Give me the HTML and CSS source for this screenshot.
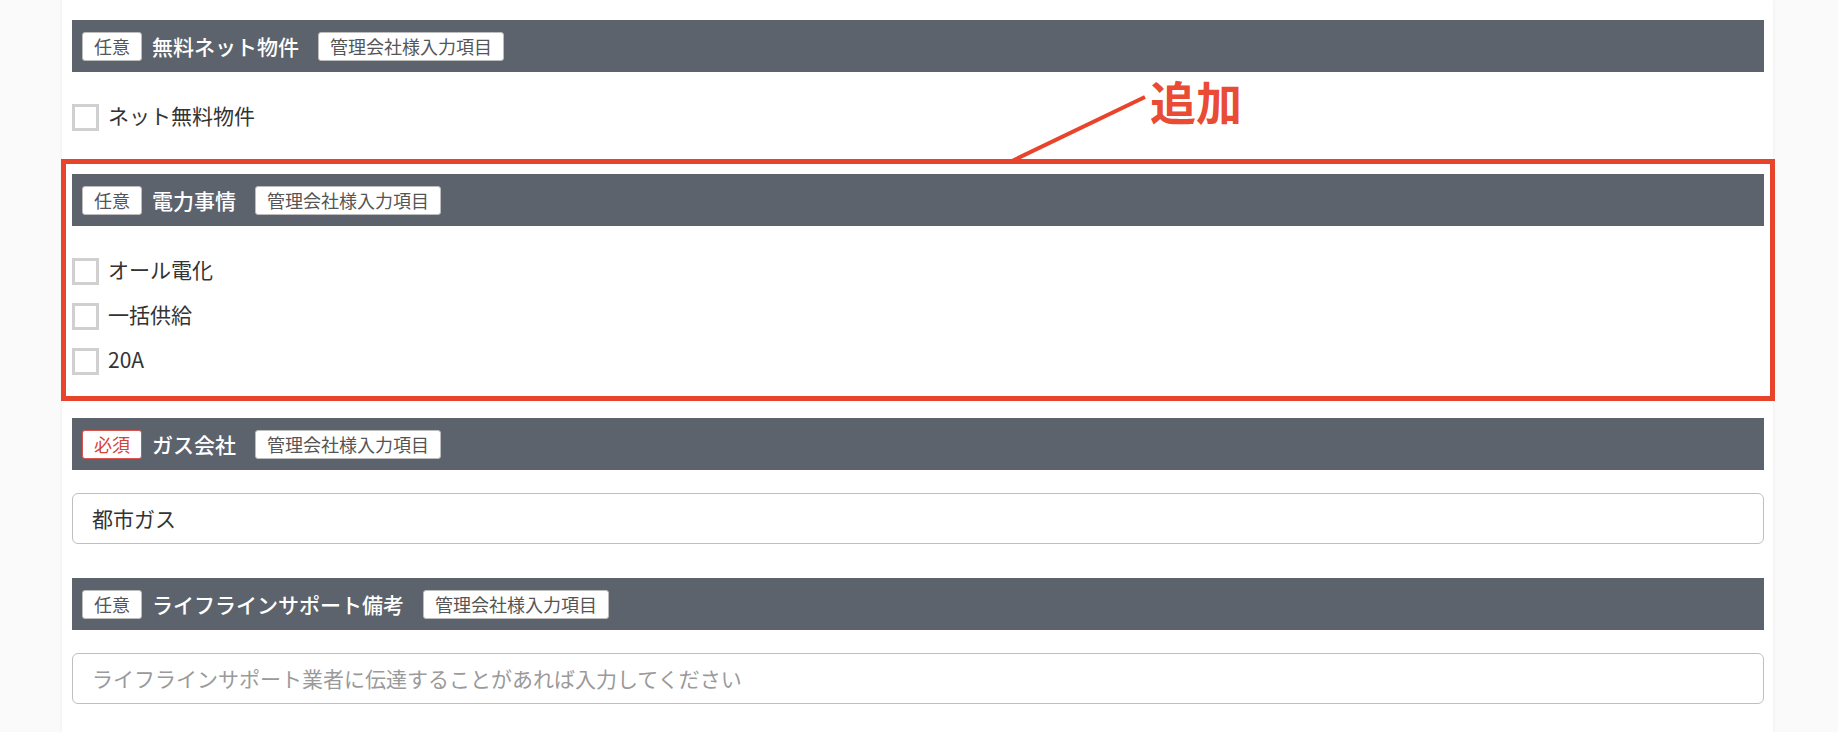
FILE: index.html
```html
<!DOCTYPE html>
<html lang="ja">
<head>
<meta charset="utf-8">
<title>物件情報入力</title>
<link rel="stylesheet" href="styles.css">
</head>
<body>
<div class="page">
  <main class="card">
    <section class="section">
      <div class="section-head">
        <span class="badge">任意</span>
        <span class="title">無料ネット物件</span>
        <span class="badge">管理会社様入力項目</span>
      </div>
      <div class="section-body">
        <label class="check-row"><span class="checkbox"></span><span class="check-label">ネット無料物件</span></label>
      </div>
    </section>

    <section class="section">
      <div class="section-head">
        <span class="badge">任意</span>
        <span class="title">電力事情</span>
        <span class="badge">管理会社様入力項目</span>
      </div>
      <div class="section-body">
        <label class="check-row"><span class="checkbox"></span><span class="check-label">オール電化</span></label>
        <label class="check-row"><span class="checkbox"></span><span class="check-label">一括供給</span></label>
        <label class="check-row"><span class="checkbox"></span><span class="check-label">20A</span></label>
      </div>
    </section>

    <section class="section">
      <div class="section-head">
        <span class="badge badge-req">必須</span>
        <span class="title">ガス会社</span>
        <span class="badge">管理会社様入力項目</span>
      </div>
      <div class="section-body">
        <input class="text-input" type="text" value="都市ガス">
      </div>
    </section>

    <section class="section">
      <div class="section-head">
        <span class="badge">任意</span>
        <span class="title">ライフラインサポート備考</span>
        <span class="badge">管理会社様入力項目</span>
      </div>
      <div class="section-body">
        <input class="text-input" type="text" placeholder="ライフラインサポート業者に伝達することがあれば入力してください">
      </div>
    </section>
  </main>

  <div class="annot-box"></div>
  <svg class="annot-line" width="1838" height="200" viewBox="0 0 1838 200">
    <line x1="1145" y1="97" x2="1012" y2="161" stroke="#e8432b" stroke-width="4"/>
  </svg>
  <div class="annot-label">追加</div>
</div>
</body>
</html>
```

FILE: styles.css
```css
* {
  box-sizing: border-box;
}

html, body {
  margin: 0;
  padding: 0;
  background: #fafafa;
  font-family: "Noto Sans CJK JP", "Noto Sans", sans-serif;
  color: #333;
}

.page {
  position: relative;
  width: 1838px;
  height: 732px;
  overflow: hidden;
}

.card {
  margin-left: 62px;
  width: 1711px;
  min-height: 732px;
  padding: 20px 9px 0 10px;
  background: #fff;
  box-shadow: 0 0 4px rgba(0, 0, 0, 0.06);
}

.section {
  margin-bottom: 34px;
}

.section-head {
  height: 52px;
  background: #5d636c;
  display: flex;
  align-items: center;
  padding-left: 10px;
}

.badge {
  display: inline-block;
  height: 29px;
  line-height: 27px;
  padding: 0 11px;
  font-size: 18px;
  color: #555;
  background: #fff;
  border: 1px solid #bdbdbd;
  border-radius: 3px;
  white-space: nowrap;
}

.badge-req {
  color: #d2433a;
  border-color: #d9534f;
}

.title {
  color: #fff;
  font-size: 21px;
  font-weight: 500;
  margin: 0 19px 0 10px;
  white-space: nowrap;
}

.section-body {
  padding-top: 23px;
}

.check-row {
  height: 45px;
  display: flex;
  align-items: center;
}

.checkbox {
  width: 27px;
  height: 27px;
  border: 3px solid #d0d0d0;
  background: #fff;
  margin-right: 9px;
  flex: none;
}

.check-label {
  font-size: 21px;
  line-height: 1.4;
  padding-bottom: 4px;
  color: #333;
}

.text-input {
  display: block;
  width: 100%;
  height: 51px;
  padding: 0 19px 2px;
  border: 1px solid #bfbfbf;
  border-radius: 6px;
  font-family: "Noto Sans CJK JP", "Noto Sans", sans-serif;
  font-size: 21px;
  color: #333;
  background: #fff;
  outline: none;
}

.text-input::placeholder {
  color: #9a9a9a;
}

.annot-box {
  position: absolute;
  left: 61px;
  top: 159px;
  width: 1714px;
  height: 242px;
  border: 5px solid #e8432b;
  pointer-events: none;
}

.annot-line {
  position: absolute;
  left: 0;
  top: 0;
  pointer-events: none;
}

.annot-label {
  position: absolute;
  left: 1150px;
  top: 73px;
  font-size: 46px;
  line-height: 1.2;
  font-weight: 700;
  color: #ea4b35;
  white-space: nowrap;
}
```
